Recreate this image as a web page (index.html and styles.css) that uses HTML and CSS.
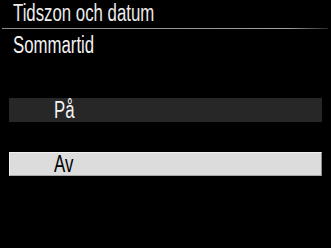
FILE: index.html
```html
<!DOCTYPE html>
<html lang="sv">
<head>
  <meta charset="UTF-8" />
  <title>Tidszon och datum</title>
  <link rel="stylesheet" href="styles.css">
</head>
<body>
  <div class="screen">
    <div class="title"><span class="narrow">Tidszon och datum</span></div>
    <div class="rule"></div>
    <div class="subtitle"><span class="narrow">Sommartid</span></div>

    <ul class="options">
      <li class="option"><span class="narrow">På</span></li>
      <li class="option selected"><span class="narrow">Av</span></li>
    </ul>
  </div>
</body>
</html>
```

FILE: styles.css
```css
body {
  margin: 0;
  background: #000;
  color: #f2f2f2;
  font-family: 'Liberation Sans', Arial, sans-serif;
}

.screen {
  width: 331px;
  height: 248px;
  overflow: hidden;
}

.narrow {
  display: inline-block;
  transform: scaleX(0.73);
  transform-origin: left center;
  white-space: nowrap;
}

.title {
  padding-left: 13px;
  height: 28px;
  font-size: 23px;
  line-height: 26px;
  color: #ececec;
}

.rule {
  height: 1px;
  margin: 0 3px 0 2px;
  background: linear-gradient(to right, #8c8c8c, #a0a0a0 88%, #2a2a2a);
}

.subtitle {
  padding: 3px 0 0 13px;
  font-size: 23px;
  line-height: 26px;
}

.options {
  list-style: none;
  margin: 40px 0 0 9px;
  padding: 0;
  width: 313px;
  display: flex;
  flex-direction: column;
  gap: 30px;
}

.option {
  box-sizing: border-box;
  height: 24px;
  padding-left: 45px;
  font-size: 23px;
  line-height: 24px;
  background: #272727;
  color: #f4f4f4;
}

.option.selected {
  background: #dcdcdc;
  border: 1px solid;
  border-color: #f0f0f0 #8c8c8c #a8a8a8 #f0f0f0;
  line-height: 22px;
  padding-left: 44px;
  color: #000;
}
```
